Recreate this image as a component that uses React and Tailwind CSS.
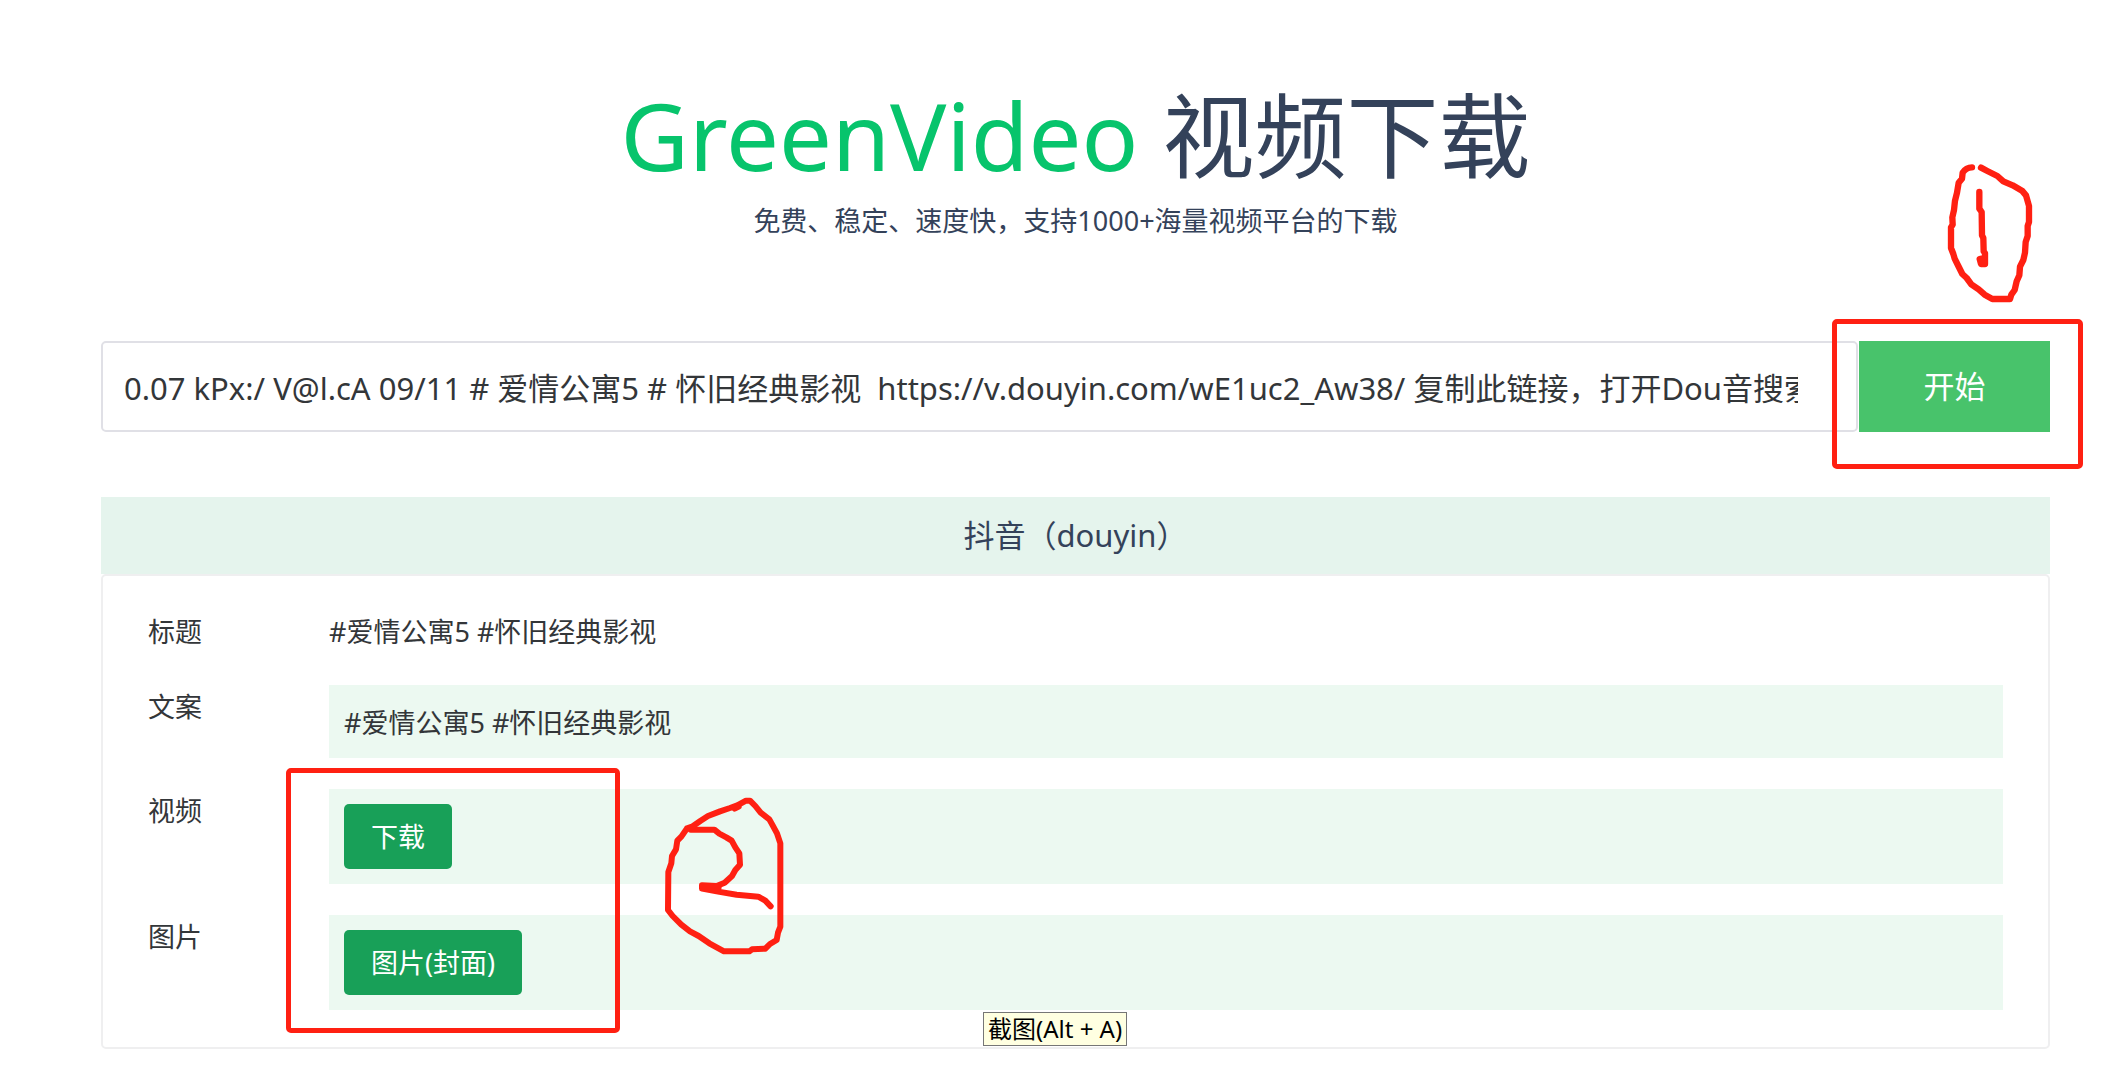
import { useState } from 'react';

const SHARE_TEXT =
  '0.07 kPx:/ V@l.cA 09/11 # 爱情公寓5 # 怀旧经典影视  https://v.douyin.com/wE1uc2_Aw38/ 复制此链接，打开Dou音搜索';

function Row({ label, children }) {
  return (
    <div className="flex items-start">
      <dt className="w-[181px] shrink-0 leading-[44px]">{label}</dt>
      <dd className="min-w-0 grow">{children}</dd>
    </div>
  );
}

function DownloadButton({ children }) {
  return (
    <button type="button" className="flex h-[65px] items-center rounded-[5px] bg-[#18a058] px-[27px] pt-[2px] text-white">
      {children}
    </button>
  );
}

function MarkOne() {
  return (
    <svg
      className="absolute right-[90px] top-[160px] h-[145px] w-[90px]"
      viewBox="435 60 270 435"
      fill="none"
      stroke="#ff2012"
      strokeWidth="19"
      strokeLinecap="round"
      strokeLinejoin="round"
      aria-hidden="true"
    >
      <path d="M516 82Q498 82 488 98L486 116L476 128L471 158L465 182L462 210L457 232L458 254L453 262L453 324L460 342L464 356L475 378L487 402L500 414L514 433L536 448L554 464L577 477L630 477L634 464L644 450L650 424L658 406L660 380L670 360L675 338L677 306L683 288L683 258L687 246L687 198L678 166L666 152L638 136L610 124L592 108L562 93L543 83" />
      <path d="M538 156L538 206L545 216L546 286L550 294L551 334L555 340L555 372L543 372L539 357L552 354" />
    </svg>
  );
}

function MarkTwo() {
  return (
    <svg
      className="absolute left-[664px] top-[795px] h-[164px] w-[122px]"
      viewBox="72 45 366 492"
      fill="none"
      stroke="#ff2012"
      strokeWidth="18"
      strokeLinecap="round"
      strokeLinejoin="round"
      aria-hidden="true"
    >
      <path d="M152 149L223 149L238 161L259 172L275 182L286 202L298 220L300 254L286 270L276 288L254 308L230 318L186 316L186 326L230 334L290 344L355 350L376 362L392 379M186 320L236 322" />
      <path d="M141 145L124 170L112 182L108 208L96 228L94 250L85 276L84 390L98 408L124 434L150 454L176 468L208 490L252 514L328 514L336 508L376 506L390 492L410 480L414 458L421 440L421 190L411 160L398 136L388 118L362 98L346 78L330 62L318 62L292 76L270 84L240 94L204 108L182 122L156 140L141 145M284 86L296 80" />
    </svg>
  );
}

export default function App() {
  const [link, setLink] = useState(SHARE_TEXT);

  return (
    <div className="relative min-h-screen overflow-x-hidden bg-white font-['Noto_Sans','Noto_Sans_CJK_SC',sans-serif] text-[27px] text-[#333639]">
      <main className="ml-[101px] mr-[75px] pt-[70px]">
        <header className="text-center text-[#34425a]">
          <h1 className="text-[92px] leading-[130px]">
            <span className="text-[94px] text-[#07c46c]">GreenVideo</span> 视频下载
          </h1>
          <p className="leading-[40px]">免费、稳定、速度快，支持1000+海量视频平台的下载</p>
        </header>

        <form className="mt-[100px] flex gap-px" onSubmit={(e) => e.preventDefault()}>
          <input
            type="text"
            aria-label="视频链接"
            value={link}
            onChange={(e) => setLink(e.target.value)}
            className="h-[91px] min-w-0 grow rounded-[5px] border-2 border-[#e0e0e6] bg-white pl-[21px] pr-[58px] text-[31px] outline-none"
          />
          <button type="submit" className="w-[191px] shrink-0 bg-[#48c36b] text-[31px] text-white">
            开始
          </button>
        </form>

        <section className="mt-[65px]">
          <h2 className="bg-[#e5f4ed] text-center text-[31px] leading-[77px] text-[#34425a]">抖音（douyin）</h2>
          <div className="rounded-[5px] border-2 border-[#efeff0] px-[45px] pb-[37px] pt-[34px]">
            <dl className="flex flex-col gap-[31px]">
              <Row label="标题">
                <p className="leading-[44px]">#爱情公寓5 #怀旧经典影视</p>
              </Row>
              <Row label="文案">
                <p className="bg-[#ecf9f1] px-[15px] pt-[2px] leading-[71px]">#爱情公寓5 #怀旧经典影视</p>
              </Row>
              <Row label="视频">
                <div className="bg-[#ecf9f1] p-[15px]">
                  <DownloadButton>下载</DownloadButton>
                </div>
              </Row>
              <Row label="图片">
                <div className="bg-[#ecf9f1] p-[15px]">
                  <DownloadButton>图片(封面)</DownloadButton>
                </div>
              </Row>
            </dl>
          </div>
        </section>
      </main>

      <div className="pointer-events-none absolute right-[42px] top-[319px] h-[150px] w-[251px] rounded-[5px] border-[5px] border-[#ff2012]" />
      <div className="pointer-events-none absolute left-[286px] top-[768px] h-[265px] w-[334px] rounded-[5px] border-[5px] border-[#ff2012]" />
      <MarkOne />
      <MarkTwo />
      <div
        role="tooltip"
        className="absolute left-[983px] top-[1012px] border border-[#767676] bg-[#ffffe1] px-[4px] text-[24px] leading-[32px] whitespace-nowrap text-black"
      >
        截图(Alt + A)
      </div>
    </div>
  );
}
